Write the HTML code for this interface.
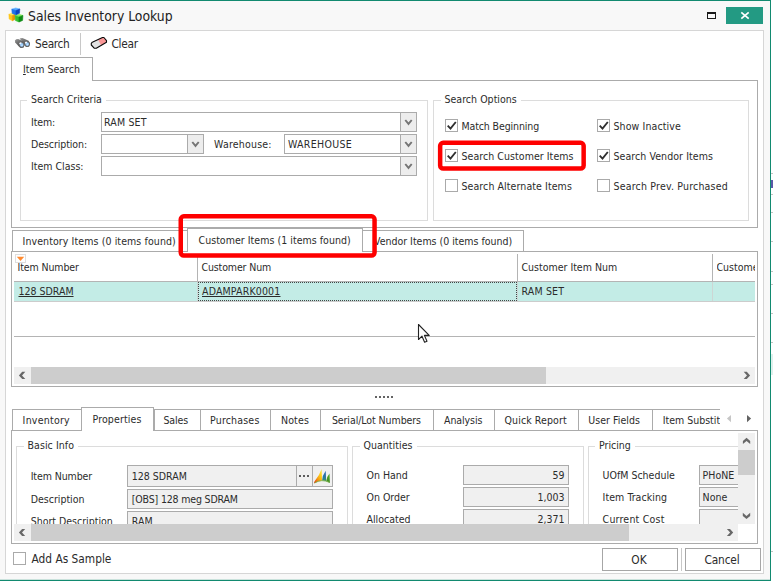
<!DOCTYPE html>
<html lang="en">
<head>
<meta charset="utf-8">
<title>Sales Inventory Lookup</title>
<style>
html,body{margin:0;padding:0;}
body{width:773px;height:581px;overflow:hidden;background:#fff;position:relative;
 font-family:"DejaVu Sans Condensed","Liberation Sans",sans-serif;font-size:10.5px;color:#2b2b2b;}
#win{position:absolute;left:0;top:0;width:770px;height:580px;background:#f8f8f8;}
.abs,.t,.box,.inp,.tab,.cb,.grp,.ln{position:absolute;box-sizing:border-box;}
.t{white-space:nowrap;line-height:13px;height:13px;}
.inp{border:1px solid #ababab;background:#fff;}
.ro{background:#f0f0f0;}
.tab{border:1px solid #ababab;border-bottom:none;background:#fff;}
.cb{width:13px;height:13px;border:1px solid #aaaaaa;background:#fff;}
.grp{border:1px solid #dcdcdc;}
.glab{position:absolute;background:#fff;white-space:nowrap;line-height:13px;height:13px;padding:0 4px;}
.ddb{position:absolute;right:0;top:0;bottom:0;width:15px;border-left:1px solid #ababab;background:#ededed;}
.ddb svg{position:absolute;left:3px;top:6px;}
.cb svg{position:absolute;left:0;top:0;}
.red{position:absolute;box-sizing:border-box;border:4px solid #ee0a0e;border-radius:6px;}
</style>
</head>
<body>
<div id="win">
 <!-- window frame -->
 <div class="abs" style="left:0;top:0;width:771px;height:1px;background:#128a70"></div>
 <div class="abs" style="left:770px;top:0;width:1px;height:581px;background:#128a70"></div>
 <div class="abs" style="left:0;top:580px;width:771px;height:1px;background:#128a70"></div>
 <div class="abs" style="left:0;top:579px;width:771px;height:1px;background:#128a70;opacity:.2"></div>

 <!-- title bar -->
 <svg class="abs" style="left:8px;top:7px" width="16" height="16" viewBox="0 0 16 16">
  <g stroke-linejoin="round" stroke-width="0.6">
  <path d="M0.9 7.3 L3.7 6.1 L7.1 7.2 L4.3 8.7 Z" fill="#ffe960" stroke="#ffe960"/>
  <path d="M0.9 7.3 L4.3 8.7 L4.5 13.7 L1.2 12 Z" fill="#ffc61a" stroke="#ffc61a"/>
  <path d="M4.3 8.7 L7.1 7.2 L7.1 12.3 L4.5 13.7 Z" fill="#e8940a" stroke="#e8940a"/>
  <path d="M7.1 8.6 L11 7.2 L14.9 8.4 L11 10 Z" fill="#84ea62" stroke="#84ea62"/>
  <path d="M7.1 8.6 L11 10 L11 15 L7.4 13.5 Z" fill="#34c030" stroke="#34c030"/>
  <path d="M11 10 L14.9 8.4 L14.6 13.4 L11 15 Z" fill="#0f8c16" stroke="#0f8c16"/>
  <path d="M3.8 2.2 L7.7 1 L11.8 2 L8 3.5 Z" fill="#58adff" stroke="#58adff"/>
  <path d="M3.8 2.2 L8 3.5 L8 7.8 L4.2 6.5 Z" fill="#1f72ea" stroke="#1f72ea"/>
  <path d="M8 3.5 L11.8 2 L11.5 6.3 L8 7.8 Z" fill="#0b44c0" stroke="#0b44c0"/>
  </g>
 </svg>
 <div class="t" style="left:28px;top:7px;font-size:13.8px;line-height:18px;height:18px;color:#222">Sales Inventory Lookup</div>
 <!-- maximize -->
 <div class="abs" style="left:707px;top:12px;width:9px;height:7px;border:1px solid #1a1a1a;border-top-width:2px"></div>
 <!-- close -->
 <div class="abs" style="left:726px;top:7px;width:37px;height:17px;background:#239a83"></div>
 <svg class="abs" style="left:740px;top:11px" width="10" height="9" viewBox="0 0 10 9"><path d="M1.3 1.3 L8.7 7.7 M8.7 1.3 L1.3 7.7" stroke="#fff" stroke-width="1.7" fill="none"/></svg>

 <!-- inner panel -->
 <div class="abs" style="left:5px;top:30px;width:759px;height:544px;border:1px solid #d6d6d6;background:#fff"></div>

 <!-- toolbar -->
 <svg class="abs" style="left:14px;top:37px" width="17" height="12" viewBox="0 0 17 12">
  <defs><linearGradient id="bn" x1="0" y1="0" x2="0.6" y2="1"><stop offset="0" stop-color="#9a9a9a"/><stop offset="0.5" stop-color="#6a6a6a"/><stop offset="1" stop-color="#4a4a4a"/></linearGradient></defs>
  <path d="M5.6 1.6 L8.2 0.9 L9.6 1.4 L14.6 3.8 L16 6.6 L15.2 9.4 L12.4 10 L9.6 6.2 Z" fill="url(#bn)"/>
  <path d="M0.9 3.4 L2.2 2.2 L4.2 2 L9.8 4.4 L10.6 7.6 L9.6 10.4 L6.8 11 L4.4 9 L1.2 5.6 Z" fill="url(#bn)"/>
  <circle cx="7.5" cy="7.7" r="2.9" fill="#666"/>
  <circle cx="13" cy="6.9" r="2.8" fill="#666"/>
  <circle cx="7.7" cy="7.9" r="1.8" fill="#90c6fa"/>
  <circle cx="13.2" cy="7.1" r="1.8" fill="#90c6fa"/>
  <ellipse cx="6.4" cy="6.3" rx="1.3" ry="0.9" transform="rotate(-35 6.4 6.3)" fill="#f4f8ff"/>
  <ellipse cx="12" cy="5.6" rx="1.2" ry="0.9" transform="rotate(-35 12 5.6)" fill="#f4f8ff"/>
  <circle cx="8" cy="8.3" r="0.9" fill="#c4e2ff"/>
  <circle cx="13.5" cy="7.4" r="0.9" fill="#c4e2ff"/>
 </svg>
 <div class="t" style="left:35px;top:37px;font-size:11.8px;line-height:15px;height:15px;letter-spacing:-0.32px">Search</div>
 <div class="abs" style="left:80px;top:33px;width:1px;height:22px;background:#c8c8c8"></div>
 <svg class="abs" style="left:90px;top:36px" width="18" height="14" viewBox="0 0 18 14">
  <path d="M1.3 7.3 L2.3 6.2 L12.5 1.5 L13.9 1.5 L16.5 4.6 L16.5 6.2 L6.3 12.3 L4.4 12.3 L1.3 9 Z" fill="#e2e2e2"/>
  <path d="M8 3.6 L12.5 1.5 L13.9 1.5 L16.5 4.6 L16.5 6.2 L11.2 9.4 Z" fill="#fa9696"/>
  <path d="M1.3 7.3 L2.3 6.2 L12.5 1.5 L13.9 1.5 L16.5 4.6 L16.5 6.2 L6.3 12.3 L4.4 12.3 L1.3 9 Z" fill="none" stroke="#0a0a0a" stroke-width="1.1" stroke-linejoin="round"/>
 </svg>
 <div class="t" style="left:111.5px;top:37px;font-size:11.8px;line-height:15px;height:15px;letter-spacing:-0.3px">Clear</div>

 <!-- main tab: Item Search -->
 <div class="abs" style="left:11px;top:80px;width:747px;height:148px;border:1px solid #ababab;background:#fff"></div>
 <div class="tab" style="left:11px;top:57px;width:82px;height:24px;"></div>
 <div class="t" style="left:23px;top:63px"><u>I</u>tem Search</div>

 <!-- group: Search Criteria -->
 <div class="grp" style="left:20px;top:100px;width:408px;height:121px"></div>
 <div class="glab" style="left:27px;top:93px;letter-spacing:0.04px">Search Criteria</div>
 <div class="t" style="left:31px;top:116px;letter-spacing:-0.14px">Item:</div>
 <div class="t" style="left:31px;top:138px;letter-spacing:-0.08px">Description:</div>
 <div class="t" style="left:31px;top:160px">Item Class:</div>
 <div class="inp" style="left:101px;top:112px;width:316px;height:20px"><div class="ddb"><svg width="9" height="7" viewBox="0 0 9 7"><path d="M1.3 1 L4.5 4.9 L7.7 1" stroke="#757575" stroke-width="1.9" fill="none"/></svg></div></div>
 <div class="inp" style="left:101px;top:134px;width:103px;height:20px"><div class="ddb"><svg width="9" height="7" viewBox="0 0 9 7"><path d="M1.3 1 L4.5 4.9 L7.7 1" stroke="#757575" stroke-width="1.9" fill="none"/></svg></div></div>
 <div class="inp" style="left:284px;top:134px;width:133px;height:20px"><div class="ddb"><svg width="9" height="7" viewBox="0 0 9 7"><path d="M1.3 1 L4.5 4.9 L7.7 1" stroke="#757575" stroke-width="1.9" fill="none"/></svg></div></div>
 <div class="inp" style="left:101px;top:156px;width:316px;height:20px"><div class="ddb"><svg width="9" height="7" viewBox="0 0 9 7"><path d="M1.3 1 L4.5 4.9 L7.7 1" stroke="#757575" stroke-width="1.9" fill="none"/></svg></div></div>
 <div class="t" style="left:104px;top:116px;letter-spacing:0.17px">RAM SET</div>
 <div class="t" style="left:214px;top:138px;letter-spacing:0.21px">Warehouse:</div>
 <div class="t" style="left:288px;top:138px;letter-spacing:0.31px">WAREHOUSE</div>

 <!-- group: Search Options -->
 <div class="grp" style="left:433px;top:100px;width:316px;height:121px"></div>
 <div class="glab" style="left:440.5px;top:93px;letter-spacing:0.03px">Search Options</div>
 <div class="cb" style="left:445px;top:119px"><svg width="11" height="11" viewBox="0 0 11 11"><path d="M1.7 5.7 L4.5 8.6 L9.8 2" stroke="#2e2e2e" stroke-width="1.85" fill="none"/></svg></div>
 <div class="cb" style="left:445px;top:149px"><svg width="11" height="11" viewBox="0 0 11 11"><path d="M1.7 5.7 L4.5 8.6 L9.8 2" stroke="#2e2e2e" stroke-width="1.85" fill="none"/></svg></div>
 <div class="cb" style="left:445px;top:179px"></div>
 <div class="cb" style="left:597px;top:119px"><svg width="11" height="11" viewBox="0 0 11 11"><path d="M1.7 5.7 L4.5 8.6 L9.8 2" stroke="#2e2e2e" stroke-width="1.85" fill="none"/></svg></div>
 <div class="cb" style="left:597px;top:149px"><svg width="11" height="11" viewBox="0 0 11 11"><path d="M1.7 5.7 L4.5 8.6 L9.8 2" stroke="#2e2e2e" stroke-width="1.85" fill="none"/></svg></div>
 <div class="cb" style="left:597px;top:179px"></div>
 <div class="t" style="left:461.5px;top:120px;letter-spacing:-0.12px">Match Beginning</div>
 <div class="t" style="left:461.5px;top:150px;letter-spacing:0.06px">Search Customer Items</div>
 <div class="t" style="left:461.5px;top:180px;letter-spacing:0.09px">Search Alternate Items</div>
 <div class="t" style="left:613.5px;top:120px;letter-spacing:0.11px">Show Inactive</div>
 <div class="t" style="left:613.5px;top:150px;letter-spacing:0.08px">Search Vendor Items</div>
 <div class="t" style="left:613.5px;top:180px;letter-spacing:0.20px">Search Prev. Purchased</div>

 <!-- result tabs -->
 <div class="tab" style="left:12px;top:230px;width:176px;height:22px;"></div>
 <div class="tab" style="left:362px;top:230px;width:162px;height:22px;"></div>
 <div class="t" style="left:22.5px;top:235px;letter-spacing:0.10px">Inventory Items (0 items found)</div>
 <div class="t" style="left:374px;top:235px">Vendor Items (0 items found)</div>
 <!-- grid -->
 <div class="abs" style="left:11px;top:251px;width:747px;height:136px;border:1px solid #ababab;background:#fff"></div>
 <div class="tab" style="left:187px;top:228px;width:176px;height:24px;"></div>
 <div class="t" style="left:198.5px;top:234px;letter-spacing:0.04px">Customer Items (1 items found)</div>


 <!-- grid content -->
 <div class="abs" style="left:14px;top:281px;width:741px;height:1px;background:#b4b4b4"></div>
 <div class="abs" style="left:197px;top:254px;width:1px;height:27px;background:#b4b4b4"></div>
 <div class="abs" style="left:517px;top:254px;width:1px;height:27px;background:#b4b4b4"></div>
 <div class="abs" style="left:712px;top:254px;width:1px;height:27px;background:#b4b4b4"></div>
 <svg class="abs" style="left:15px;top:254px" width="11" height="9" viewBox="0 0 11 9"><rect x="0.5" y="0.5" width="10" height="8" fill="#fff" stroke="#dedede"/><path d="M1.8 2.8 H9.2 L5.5 7 Z" fill="#ff8a30"/></svg>
 <div class="t" style="left:17.5px;top:261px;letter-spacing:-0.10px">Item Number</div>
 <div class="t" style="left:201.5px;top:261px;letter-spacing:-0.13px">Customer Num</div>
 <div class="t" style="left:521.5px;top:261px">Customer Item Num</div>
 <div class="abs" style="left:716.5px;top:261px;width:38.5px;height:13px;overflow:hidden"><div class="t" style="left:0;top:0">Customer</div></div>
 <div class="abs" style="left:14px;top:282px;width:741px;height:19px;background:#c3ece6"></div>
 <div class="abs" style="left:197px;top:282px;width:1px;height:19px;background:#cdd6d4"></div>
 <div class="abs" style="left:517px;top:282px;width:1px;height:19px;background:#cdd6d4"></div>
 <div class="abs" style="left:712px;top:282px;width:1px;height:19px;background:#cdd6d4"></div>
 <div class="abs" style="left:14px;top:301px;width:741px;height:1px;background:#cccccc"></div>
 <div class="abs" style="left:198px;top:282px;width:319px;height:19px;border:1px dotted #444"></div>
 <div class="t" style="left:18.5px;top:285px;text-decoration:underline">128 SDRAM</div>
 <div class="t" style="left:202px;top:285px;text-decoration:underline;letter-spacing:0.17px">ADAMPARK0001</div>
 <div class="t" style="left:521.5px;top:285px;letter-spacing:0.17px">RAM SET</div>
 <div class="abs" style="left:14px;top:336px;width:741px;height:1px;background:#b4b4b4"></div>
 <!-- grid hscroll -->
 <div class="abs" style="left:14px;top:367px;width:741px;height:17px;background:#f0f0f0"></div>
 <div class="abs" style="left:31px;top:367px;width:515px;height:17px;background:#cdcdcd"></div>
 <!-- splitter dots -->
 <div class="abs" style="left:375px;top:396px;width:18px;height:2px;background:repeating-linear-gradient(90deg,#636363 0,#636363 2px,transparent 2px,transparent 4px)"></div>
 <!-- mouse cursor -->
 <svg class="abs" style="left:417px;top:323px" width="14" height="21" viewBox="0 0 14 21"><path d="M1.5 1.5 V16.5 L5 13.2 L7.6 19.2 L10 18.2 L7.4 12.4 H12.2 Z" fill="#fff" stroke="#222" stroke-width="1.1" stroke-linejoin="round"/></svg>

 <!-- bottom tabs -->
 <div class="abs" style="left:11px;top:430px;width:747px;height:114px;border:1px solid #ababab;background:#fff"></div>
 <div class="tab" style="left:12px;top:409px;width:70px;height:21px;"></div>
 <div class="t" style="left:22.6px;top:414px;letter-spacing:0.25px">Inventory</div>
 <div class="tab" style="left:154px;top:409px;width:47px;height:21px;"></div>
 <div class="t" style="left:163.5px;top:414px;letter-spacing:-0.13px">Sales</div>
 <div class="tab" style="left:200px;top:409px;width:71px;height:21px;"></div>
 <div class="t" style="left:210px;top:414px;letter-spacing:0.19px">Purchases</div>
 <div class="tab" style="left:270px;top:409px;width:51px;height:21px;"></div>
 <div class="t" style="left:281px;top:414px;letter-spacing:0.14px">Notes</div>
 <div class="tab" style="left:320px;top:409px;width:114px;height:21px;"></div>
 <div class="t" style="left:331.9px;top:414px;letter-spacing:-0.07px">Serial/Lot Numbers</div>
 <div class="tab" style="left:433px;top:409px;width:62px;height:21px;"></div>
 <div class="t" style="left:444px;top:414px;letter-spacing:-0.07px">Analysis</div>
 <div class="tab" style="left:494px;top:409px;width:85px;height:21px;"></div>
 <div class="t" style="left:504.5px;top:414px;letter-spacing:0.11px">Quick Report</div>
 <div class="tab" style="left:578px;top:409px;width:75px;height:21px;"></div>
 <div class="t" style="left:588.3px;top:414px;letter-spacing:0.05px">User Fields</div>
 <div class="abs" style="left:652px;top:409px;width:68px;height:21px;border-top:1px solid #ababab;border-left:1px solid #ababab;box-sizing:border-box;background:#fff;overflow:hidden"><div class="t" style="left:9.7px;top:4px">Item Substitutes</div></div>
 <div class="tab" style="left:81px;top:407px;width:73px;height:24px;"></div>
 <div class="t" style="left:92.5px;top:413px;letter-spacing:0.13px">Properties</div>
 <svg class="abs" style="left:726px;top:414px" width="6" height="9" viewBox="0 0 6 9"><path d="M5 1 V8.2 L0.9 4.6 Z" fill="#c6c6c6"/></svg>
 <svg class="abs" style="left:746px;top:414px" width="6" height="9" viewBox="0 0 6 9"><path d="M1 1 V8.2 L5.1 4.6 Z" fill="#626262"/></svg>
 <div class="abs" style="left:12px;top:431px;width:726px;height:93px;overflow:hidden">
  <!-- coordinates inside are page coords minus (12,431) -->
  <div class="grp" style="left:4px;top:15px;width:332px;height:120px"></div>
  <div class="glab" style="left:11.5px;top:8px;letter-spacing:0.07px">Basic Info</div>
  <div class="t" style="left:18.7px;top:39px;letter-spacing:-0.10px">Item Number</div>
  <div class="t" style="left:18.7px;top:62px">Description</div>
  <div class="t" style="left:18.7px;top:84px">Short Description</div>
  <div class="inp ro" style="left:115px;top:34px;width:206px;height:22px"></div>
  <div class="abs" style="left:284px;top:35px;width:1px;height:20px;background:#ababab"></div>
  <div class="abs" style="left:300px;top:35px;width:1px;height:20px;background:#ababab"></div>
  <div class="abs" style="left:287px;top:44px;width:10px;height:2px;background:repeating-linear-gradient(90deg,#5c5c5c 0,#5c5c5c 2px,transparent 2px,transparent 4px)"></div>
  <svg class="abs" style="left:301px;top:35px" width="19" height="19" viewBox="0 0 19 19">
   <defs>
    <linearGradient id="dy" x1="0.1" y1="1" x2="0.9" y2="0"><stop offset="0" stop-color="#e03a12"/><stop offset="0.35" stop-color="#f59a10"/><stop offset="0.7" stop-color="#ffd21a"/><stop offset="1" stop-color="#ffe94a"/></linearGradient>
    <linearGradient id="db" x1="0" y1="0" x2="0" y2="1"><stop offset="0" stop-color="#2a62b8"/><stop offset="0.7" stop-color="#2f7f9a"/><stop offset="1" stop-color="#3e9a5a"/></linearGradient>
    <linearGradient id="dg" x1="0" y1="0" x2="0" y2="1"><stop offset="0" stop-color="#5aa82a"/><stop offset="1" stop-color="#3a8a1e"/></linearGradient>
   </defs>
   <path d="M1 16.8 Q1.2 15.2 3 13.2 Q6.2 9.5 8.6 3 L9.1 14.4 Q4.5 14.8 1.6 17.2 Z" fill="url(#dy)"/>
   <path d="M9.1 14.4 Q9.3 9.6 12.7 4.8 L13.2 15.3 Q11 14.5 9.1 14.4 Z" fill="url(#db)"/>
   <path d="M13.2 15.3 Q13.4 11.2 16.5 7.6 L16.9 17 Q15 15.9 13.2 15.3 Z" fill="url(#dg)"/>
   <path d="M1.6 17 Q8.5 12.6 16.6 16.4" stroke="#7ab04a" stroke-width="0.9" fill="none"/>
  </svg>
  <div class="inp ro" style="left:115px;top:58px;width:206px;height:20px"></div>
  <div class="inp ro" style="left:115px;top:80px;width:206px;height:20px"></div>
  <div class="t" style="left:119.8px;top:39px">128 SDRAM</div>
  <div class="t" style="left:119.8px;top:62px;letter-spacing:-0.17px">[OBS] 128 meg SDRAM</div>
  <div class="t" style="left:119.8px;top:84px">RAM</div>

  <div class="grp" style="left:340px;top:15px;width:232px;height:120px"></div>
  <div class="glab" style="left:347.5px;top:8px;letter-spacing:0.04px">Quantities</div>
  <div class="t" style="left:354.5px;top:38px">On Hand</div>
  <div class="t" style="left:354.5px;top:60px">On Order</div>
  <div class="t" style="left:354.5px;top:82px">Allocated</div>
  <div class="inp ro" style="left:451px;top:34px;width:106px;height:20px"></div>
  <div class="inp ro" style="left:451px;top:56px;width:106px;height:20px"></div>
  <div class="inp ro" style="left:451px;top:78px;width:106px;height:20px"></div>
  <div class="t" style="left:451px;width:101.6px;text-align:right;top:38px">59</div>
  <div class="t" style="left:451px;width:101.6px;text-align:right;top:60px">1,003</div>
  <div class="t" style="left:451px;width:101.6px;text-align:right;top:82px">2,371</div>

  <div class="grp" style="left:576px;top:15px;width:231px;height:120px"></div>
  <div class="glab" style="left:583px;top:8px">Pricing</div>
  <div class="t" style="left:590.6px;top:38px">UOfM Schedule</div>
  <div class="t" style="left:590.6px;top:60px;letter-spacing:0.06px">Item Tracking</div>
  <div class="t" style="left:590.6px;top:82px;letter-spacing:0.21px">Current Cost</div>
  <div class="inp ro" style="left:687px;top:34px;width:106px;height:20px"></div>
  <div class="inp ro" style="left:687px;top:56px;width:106px;height:20px"></div>
  <div class="inp ro" style="left:687px;top:78px;width:106px;height:20px"></div>
  <div class="t" style="left:690.6px;top:38px">PHoNE</div>
  <div class="t" style="left:690.6px;top:60px">None</div>
 </div>
 <!-- v scrollbar -->
 <div class="abs" style="left:738px;top:433px;width:17px;height:91px;background:#f0f0f0"></div>
 <div class="abs" style="left:738px;top:450px;width:17px;height:25px;background:#cdcdcd"></div>
 <!-- h scrollbar -->
 <div class="abs" style="left:14px;top:524px;width:724px;height:17px;background:#f0f0f0"></div>
 <div class="abs" style="left:31px;top:524px;width:598px;height:17px;background:#cdcdcd"></div>

 <svg class="abs" style="left:0;top:0" width="773" height="581" viewBox="0 0 773 581">
  <polygon points="743.70,371.80 746.80,371.80 750.10,375.40 746.80,379.00 743.70,379.00 747.00,375.40" fill="#686868"/>
  <polygon points="25.30,371.80 22.20,371.80 18.90,375.40 22.20,379.00 25.30,379.00 22.00,375.40" fill="#686868"/>
  <polygon points="726.90,528.90 730.00,528.90 733.20,532.40 730.00,535.90 726.90,535.90 730.10,532.40" fill="#686868"/>
  <polygon points="25.20,528.90 22.10,528.90 18.90,532.40 22.10,535.90 25.20,535.90 22.00,532.40" fill="#686868"/>
  <polygon points="742.90,444.10 742.90,441.00 746.55,437.80 750.20,441.00 750.20,444.10 746.55,440.90" fill="#686868"/>
  <polygon points="742.80,512.80 742.80,515.90 746.50,519.00 750.20,515.90 750.20,512.80 746.50,515.90" fill="#686868"/>
 </svg>
 <!-- footer -->
 <div class="cb" style="left:13px;top:552px"></div>
 <div class="t" style="left:31.5px;top:552px;font-size:11.8px;line-height:15px;height:15px">Add As Sample</div>
 <div class="abs" style="left:602px;top:548px;width:76px;height:23px;border:1px solid #a6a6a6;background:#fff"></div>
 <div class="abs" style="left:685px;top:548px;width:76px;height:23px;border:1px solid #a6a6a6;background:#fff"></div>
 <div class="abs" style="left:681px;top:548px;width:1px;height:23px;background:#c8c8c8"></div>
 <div class="t" style="left:601px;width:76px;text-align:center;top:553px;font-size:11.8px;line-height:15px;height:15px">OK</div>
 <div class="t" style="left:684px;width:76px;text-align:center;top:553px;font-size:11.8px;line-height:15px;height:15px;letter-spacing:-0.16px">Cancel</div>

 <!-- red highlights -->
 <svg class="abs" style="left:0;top:0;pointer-events:none" width="773" height="581" viewBox="0 0 773 581">
  <rect x="440.15" y="142.85" width="143.5" height="25.6" rx="3" ry="3" fill="none" stroke="#fe0000" stroke-width="4.5"/>
  <rect x="180.75" y="216.35" width="193.8" height="39.2" rx="3" ry="3" fill="none" stroke="#fe0000" stroke-width="4.5"/>
 </svg>
</div>
<!-- background sheet peeking at right edge -->
<div class="abs" style="left:771px;top:173px;width:2px;height:1px;background:#c4c4c4"></div><div class="abs" style="left:771px;top:194px;width:2px;height:1px;background:#c4c4c4"></div><div class="abs" style="left:771px;top:212px;width:2px;height:1px;background:#c4c4c4"></div><div class="abs" style="left:771px;top:241px;width:2px;height:1px;background:#c4c4c4"></div><div class="abs" style="left:771px;top:271px;width:2px;height:1px;background:#c4c4c4"></div><div class="abs" style="left:771px;top:284px;width:2px;height:1px;background:#c4c4c4"></div><div class="abs" style="left:771px;top:313px;width:2px;height:1px;background:#c4c4c4"></div><div class="abs" style="left:771px;top:342px;width:2px;height:1px;background:#c4c4c4"></div><div class="abs" style="left:771px;top:551px;width:2px;height:1px;background:#c4c4c4"></div><div class="abs" style="left:771px;top:354px;width:2px;height:21px;background:#dff1ed"></div><div class="abs" style="left:771px;top:180px;width:2px;height:8px;background:#5a58a8"></div>
</body>
</html>
